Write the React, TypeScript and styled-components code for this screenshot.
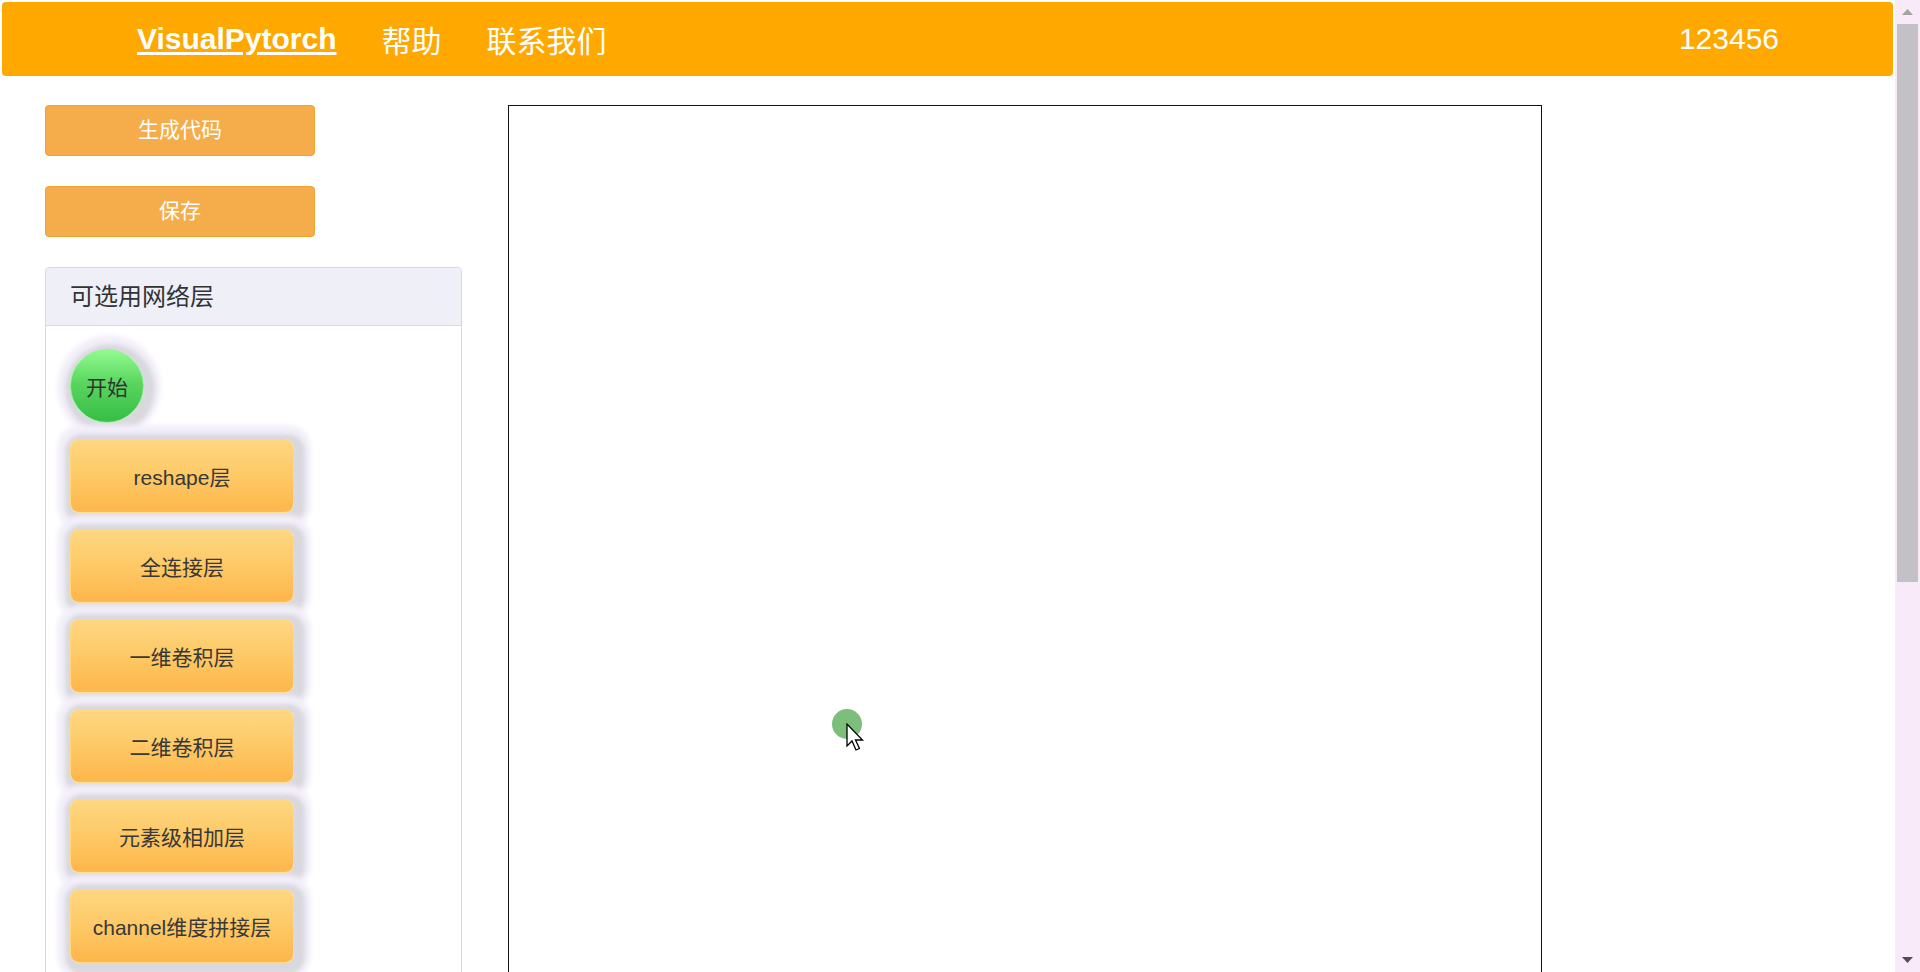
import React from "react";
import styled, { createGlobalStyle } from "styled-components";

const GlobalStyle = createGlobalStyle`
  body {
    margin: 0;
    background: #ffffff;
    font-family: "Liberation Sans", "Noto Sans CJK SC", sans-serif;
    color: #333333;
  }
`;

const Shell = styled.div`
  display: flex;
  align-items: flex-start;
`;

const Page = styled.div`
  flex: 1;
  min-width: 0;
  padding: 2px;
`;

const ScrollRail = styled.div`
  position: sticky;
  top: 0;
  width: 25px;
  height: 100vh;
  flex-shrink: 0;
  background: #f9eaf9;
  display: flex;
  flex-direction: column;
  align-items: center;
`;

const ArrowButton = styled.div`
  height: 24px;
  width: 100%;
  display: flex;
  align-items: center;
  justify-content: center;
  flex-shrink: 0;
`;

const Track = styled.div`
  flex: 1;
  width: 100%;
  padding: 0 2px;
  box-sizing: border-box;
`;

const Thumb = styled.div`
  height: 558px;
  background: #c3c1c6;
`;

const Header = styled.header`
  display: flex;
  align-items: center;
  height: 74px;
  background: #ffa800;
  border-radius: 4px;
  padding: 0 114px 0 135px;
  box-sizing: border-box;
  color: #ffffff;
  font-size: 30px;
`;

const Nav = styled.nav`
  display: flex;
  align-items: center;
  gap: 45px;
  flex: 1;
`;

const Brand = styled.a`
  font-weight: bold;
  color: #ffffff;
  text-decoration: underline;
  text-underline-offset: 3px;
  text-decoration-thickness: 3px;
`;

const NavLink = styled.a`
  color: #ffffff;
  text-decoration: none;
`;

const User = styled.span`
  color: #ffffff;
`;

const Main = styled.main`
  display: flex;
  align-items: flex-start;
  gap: 46px;
  padding: 29px 0 18px 43px;
`;

const Sidebar = styled.aside`
  width: 417px;
  display: flex;
  flex-direction: column;
  gap: 30px;
`;

const ActionButton = styled.button`
  width: 270px;
  height: 51px;
  background: #f5ad4b;
  border: 1px solid #efa02f;
  border-radius: 4px;
  color: #ffffff;
  font-family: "Liberation Sans", "Noto Sans CJK SC", sans-serif;
  font-size: 21px;
  line-height: 1;
  padding: 0 0 3px;
`;

const Panel = styled.section`
  border: 1px solid #d9d9dc;
  border-radius: 4px;
  background: #ffffff;
`;

const PanelHeader = styled.div`
  height: 58px;
  display: flex;
  align-items: center;
  padding: 0 0 4px 24px;
  box-sizing: border-box;
  background: #eeeff7;
  border-bottom: 1px solid #d9d9de;
  border-radius: 4px 4px 0 0;
  font-size: 24px;
  color: #333333;
`;

const PanelBody = styled.div`
  display: flex;
  flex-direction: column;
  align-items: flex-start;
  gap: 16px;
  padding: 23px 0 22px 24px;
`;

const halo = `3px 3px 4px 8px rgba(217, 216, 222, 1), 2px 1px 5px 15px rgba(243, 239, 249, 1)`;

const StartNode = styled.div`
  width: 74px;
  height: 74px;
  box-sizing: border-box;
  border-radius: 50%;
  border: 1px solid #8ef08e;
  background: linear-gradient(#92fb92 0%, #5ad65f 45%, #36bd45 100%);
  display: flex;
  align-items: center;
  justify-content: center;
  font-size: 21px;
  color: #333333;
  box-shadow: ${halo};
`;

const LayerNode = styled.div`
  width: 224px;
  height: 74px;
  box-sizing: border-box;
  border-radius: 9px;
  border: 1px solid #ffd982;
  background: linear-gradient(#fed782 0%, #fdc965 50%, #fdb64b 100%);
  display: flex;
  align-items: center;
  justify-content: center;
  font-size: 21px;
  color: #383838;
  box-shadow: ${halo};
`;

const Canvas = styled.div`
  position: relative;
  width: 1034px;
  height: 1480px;
  box-sizing: border-box;
  border: 1px solid #111111;
  background: #ffffff;
`;

const ClickDot = styled.div`
  position: absolute;
  left: 323px;
  top: 603px;
  width: 30px;
  height: 30px;
  border-radius: 50%;
  background: #7bbf7b;
`;

const Cursor = styled.svg`
  position: absolute;
  left: 337px;
  top: 617px;
`;

const layers = [
  "reshape层",
  "全连接层",
  "一维卷积层",
  "二维卷积层",
  "元素级相加层",
  "channel维度拼接层",
];

export default function App() {
  return (
    <>
      <GlobalStyle />
      <Shell>
        <Page>
          <Header>
            <Nav>
              <Brand href="#">VisualPytorch</Brand>
              <NavLink href="#">帮助</NavLink>
              <NavLink href="#">联系我们</NavLink>
            </Nav>
            <User>123456</User>
          </Header>
          <Main>
            <Sidebar>
              <ActionButton>生成代码</ActionButton>
              <ActionButton>保存</ActionButton>
              <Panel>
                <PanelHeader>可选用网络层</PanelHeader>
                <PanelBody>
                  <StartNode>开始</StartNode>
                  {layers.map((l) => (
                    <LayerNode key={l}>{l}</LayerNode>
                  ))}
                </PanelBody>
              </Panel>
            </Sidebar>
            <Canvas>
              <ClickDot />
              <Cursor width="20" height="30" viewBox="0 0 20 30">
                <path
                  d="M1 1 L1 23 L6 18 L10 27 L13.5 25.5 L9.5 17 L16.5 17 Z"
                  fill="#ffffff"
                  stroke="#000000"
                  strokeWidth="1.3"
                  strokeLinejoin="miter"
                />
              </Cursor>
            </Canvas>
          </Main>
        </Page>
        <ScrollRail>
          <ArrowButton>
            <svg width="11" height="6" viewBox="0 0 11 6">
              <path d="M0 6 L5.5 0 L11 6 Z" fill="#a3a3a3" />
            </svg>
          </ArrowButton>
          <Track>
            <Thumb />
          </Track>
          <ArrowButton>
            <svg width="11" height="6" viewBox="0 0 11 6">
              <path d="M0 0 L5.5 6 L11 0 Z" fill="#505050" />
            </svg>
          </ArrowButton>
        </ScrollRail>
      </Shell>
    </>
  );
}
